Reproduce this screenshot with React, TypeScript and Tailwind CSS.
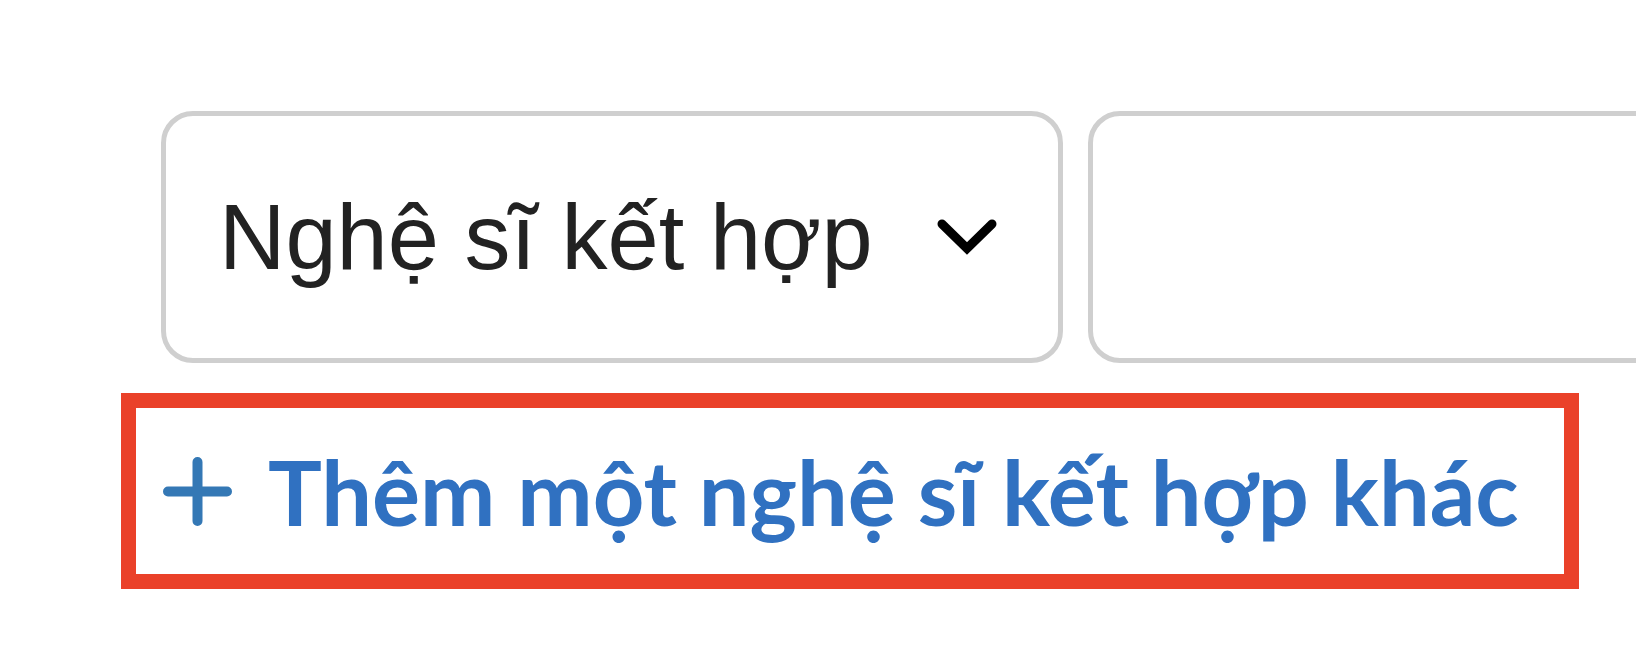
import React from "react";

function ChevronDown() {
  return (
    <svg width="60" height="36" viewBox="0 0 60 36" fill="none">
      <polyline
        points="5,5 30,29.5 55,5"
        stroke="#000"
        strokeWidth="9"
        strokeLinecap="round"
        strokeLinejoin="miter"
      />
    </svg>
  );
}

function PlusIcon() {
  return (
    <svg width="69" height="69" viewBox="0 0 69 69" fill="none">
      <path
        d="M34.5 5v59M5 34.5h59"
        stroke="#3478b5"
        strokeWidth="10"
        strokeLinecap="round"
      />
    </svg>
  );
}

export default function App() {
  return (
    <div className="w-[1636px] h-[672px] overflow-hidden bg-white">
      {/* Artist selects */}
      <div className="flex gap-[25px] pl-[161px] pt-[111px]">
        <div className="w-[902px] h-[252px] shrink-0 rounded-[32px] border-[5px] border-[#cfcfcf] bg-white flex items-center justify-between pl-[53px] pr-[61px]">
          <span
            className="text-[92px] text-[#222222] whitespace-nowrap"
            style={{ fontFamily: '"Liberation Sans", Arial, sans-serif' }}
          >
            Nghệ sĩ kết hợp
          </span>
          <ChevronDown />
        </div>
        <div className="w-[902px] h-[252px] shrink-0 rounded-[32px] border-[5px] border-[#cfcfcf] bg-white" />
      </div>

      {/* Add another artist */}
      <div className="ml-[121px] mt-[30px] w-[1458px] h-[196px] border-[15px] border-[#ea4129] flex items-center pl-[27px] gap-[36px]">
        <PlusIcon />
        <span
          className="text-[90px] font-bold text-[#3071c1] whitespace-nowrap"
          style={{ fontFamily: 'Lato, "Noto Sans", sans-serif' }}
        >
          Thêm một nghệ sĩ kết hợp khác
        </span>
      </div>
    </div>
  );
}
